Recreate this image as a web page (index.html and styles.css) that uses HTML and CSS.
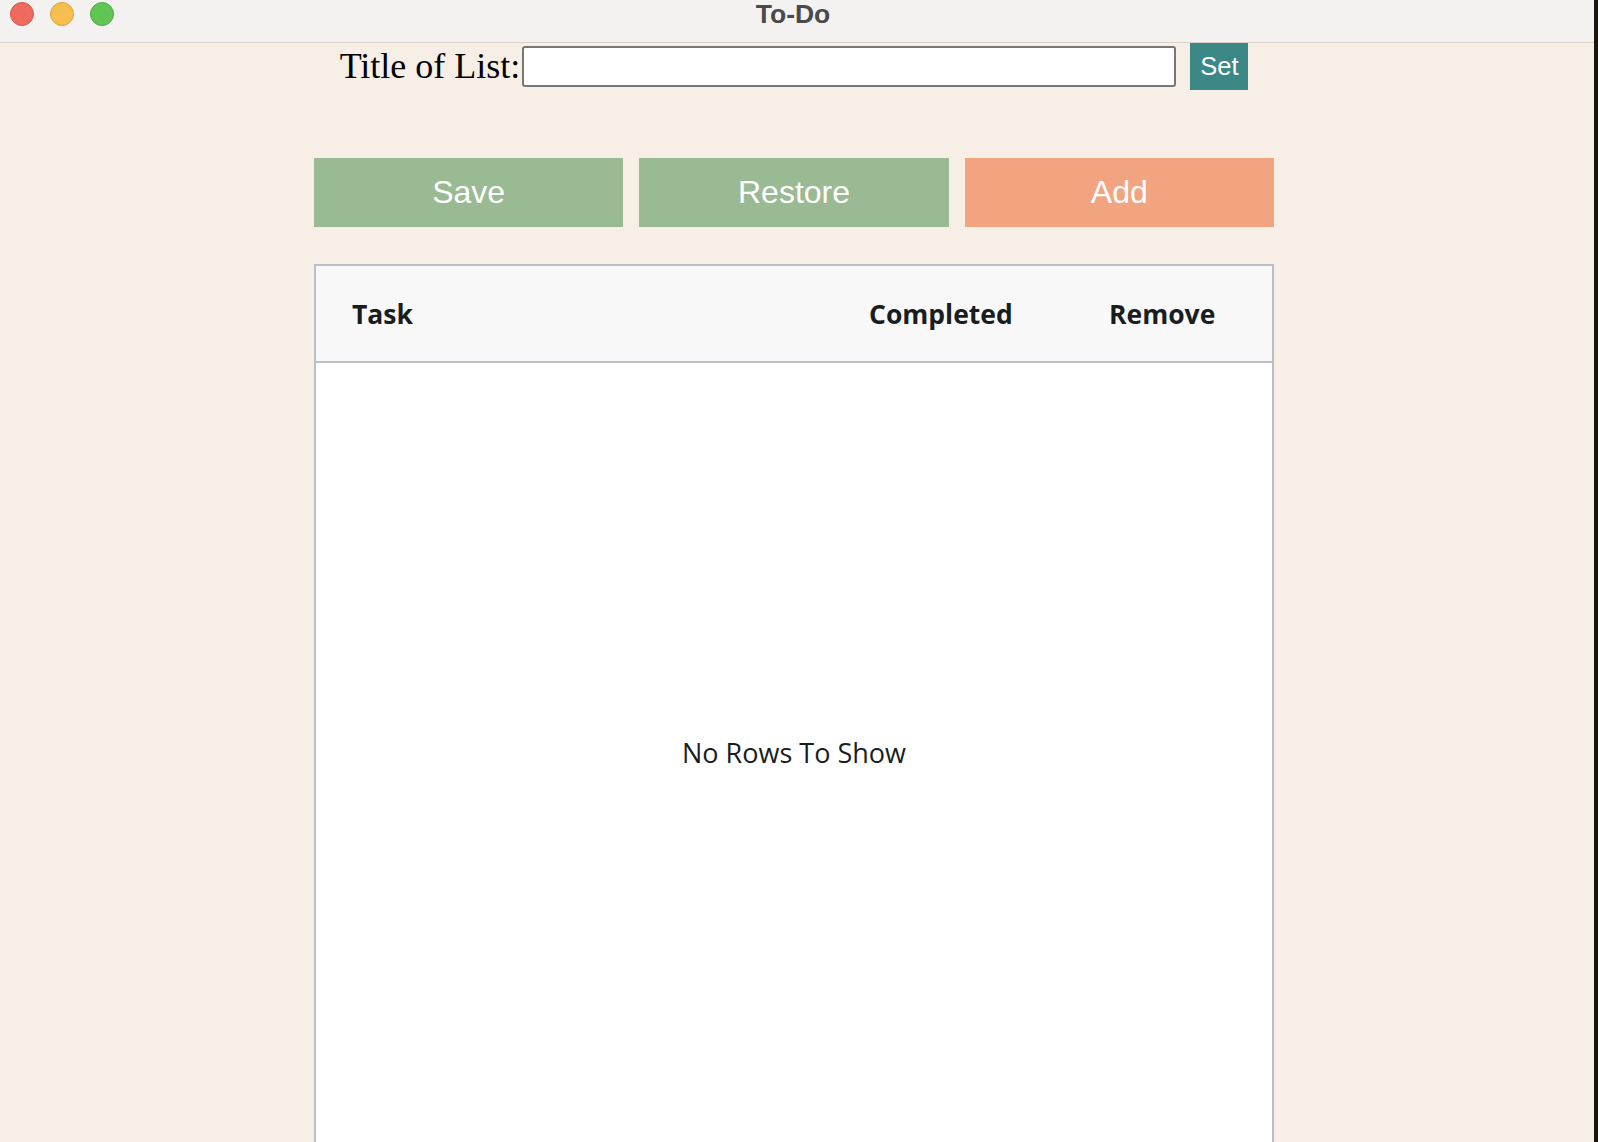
FILE: index.html
```html
<!DOCTYPE html>
<html lang="en">
<head>
<meta charset="utf-8">
<title>To-Do</title>
<link rel="stylesheet" href="styles.css">
</head>
<body>
<div class="screen">
  <div class="window">
    <header class="titlebar">
      <div class="lights">
        <span class="light red"></span>
        <span class="light yellow"></span>
        <span class="light green"></span>
      </div>
      <div class="wintitle">To-Do</div>
      <div class="spacer"></div>
    </header>
    <main class="main">
      <div class="title-row">
        <label class="title-label" for="title">Title of List:</label>
        <input class="title-input" id="title" type="text">
        <button class="set-btn">Set</button>
      </div>
      <div class="actions">
        <button class="action save">Save</button>
        <button class="action restore">Restore</button>
        <button class="action add">Add</button>
      </div>
      <div class="grid">
        <div class="grid-header">
          <div class="hcell">Task</div>
          <div class="hcell">Completed</div>
          <div class="hcell">Remove</div>
        </div>
        <div class="grid-body">
          <span class="empty">No Rows To Show</span>
        </div>
      </div>
    </main>
  </div>
  <div class="edge"></div>
</div>
</body>
</html>
```
FILE: styles.css
```css
* { box-sizing: border-box; }
html, body { margin: 0; padding: 0; }
body {
  height: 1142px;
  overflow: hidden;
  background: #1b150c;
}
.screen {
  display: flex;
  height: 1142px;
}
.window {
  width: 1594px;
  flex: none;
  background: #f7eee6;
  display: flex;
  flex-direction: column;
}
.edge {
  flex: 1;
  background: #1b150c;
}
.titlebar {
  height: 43px;
  flex: none;
  background: #f3f2f0;
  border-bottom: 1px solid #d9d1c9;
  display: grid;
  grid-template-columns: 1fr auto 1fr;
  align-items: start;
  padding-right: 8px;
}
.lights {
  display: flex;
  gap: 16px;
  padding: 2px 0 0 10px;
}
.light {
  width: 24px;
  height: 24px;
  border-radius: 50%;
  display: block;
}
.red { background: #ee6a5f; border: 1px solid #d5574d; }
.yellow { background: #f5bf4f; border: 1px solid #d9a53f; }
.green { background: #61c554; border: 1px solid #4fab43; }
.wintitle {
  font-family: "Liberation Sans", Arial, sans-serif;
  font-weight: bold;
  font-size: 26.5px;
  line-height: 28px;
  color: #4a4a4a;
}
.main {
  flex: 1;
  display: flex;
  flex-direction: column;
  align-items: center;
  padding-right: 6px;
  overflow: hidden;
}
.title-row {
  display: flex;
  align-items: center;
  height: 48px;
  margin-top: -1px;
  padding-left: 0;
}
.title-label {
  font-family: "Liberation Serif", "Times New Roman", serif;
  font-size: 36px;
  color: #000;
  margin-right: 2px;
}
.title-input {
  width: 654px;
  height: 41px;
  border: 2px solid #777;
  border-radius: 3px;
  background: #fff;
  margin: 0;
  padding: 0 6px;
}
.set-btn {
  margin-left: 14px;
  width: 58px;
  height: 48px;
  border: none;
  background: #3b8886;
  color: #fff;
  font-family: "Liberation Sans", Arial, sans-serif;
  font-size: 25.5px;
  padding: 0;
}
.actions {
  margin-top: 68px;
  width: 960px;
  display: grid;
  grid-template-columns: repeat(3, 1fr);
  gap: 16px;
}
.action {
  height: 69px;
  border: none;
  color: #fff;
  font-family: "Liberation Sans", Arial, sans-serif;
  font-size: 32px;
  padding: 0;
}
.save, .restore { background: #9aba94; }
.add { background: #f2a481; }
.grid {
  margin-top: 37px;
  width: 960px;
  height: 884px;
  flex: none;
  border: 2px solid #babfc7;
  background: #fff;
  display: flex;
  flex-direction: column;
}
.grid-header {
  height: 97px;
  flex: none;
  background: #f8f8f8;
  border-bottom: 2px solid #babfc7;
  display: grid;
  grid-template-columns: 1fr 240px 199px;
  align-items: center;
}
.hcell {
  padding-left: 36px;
  font-family: "Open Sans", "Noto Sans", sans-serif;
  font-weight: bold;
  font-size: 26.5px;
  color: #181d1f;
}
.grid-body {
  flex: 1;
  display: flex;
  align-items: center;
  justify-content: center;
  padding-bottom: 4px;
}
.empty {
  font-family: "Open Sans", "Noto Sans", sans-serif;
  font-size: 27px;
  color: #181d1f;
}
```
